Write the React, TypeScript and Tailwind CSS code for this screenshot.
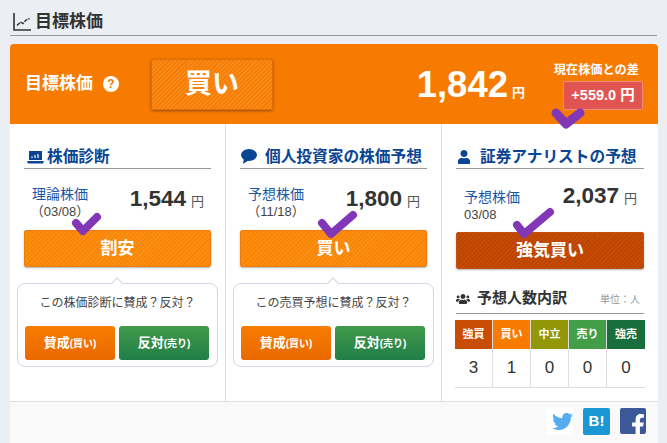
import { FaTwitter, FaFacebookF, FaUser, FaUsers } from "react-icons/fa";

const font = "font-['Liberation_Sans','Noto_Sans_CJK_JP',sans-serif]";

const votes = [
  { label: "強買", value: 3, bg: "bg-[#c94c04]" },
  { label: "買い", value: 1, bg: "bg-[#f77b00]" },
  { label: "中立", value: 0, bg: "bg-[#939607]" },
  { label: "売り", value: 0, bg: "bg-[#429f48]" },
  { label: "強売", value: 0, bg: "bg-[#196e3d]" },
];

function ColumnTitle({ icon, title }: { icon: React.ReactNode; title: string }) {
  return (
    <div className="flex h-[25px] items-end border-b border-[#999] pb-[1px] text-[#0a4594]">
      {icon}
      <span className="text-[15.7px] leading-[20px] font-bold whitespace-nowrap">{title}</span>
    </div>
  );
}

function Price({
  label,
  date,
  value,
  rowClass,
  labelClass,
  dateClass,
  valueClass,
}: {
  label: string;
  date: string;
  value: string;
  rowClass: string;
  labelClass: string;
  dateClass: string;
  valueClass: string;
}) {
  return (
    <div className={`flex justify-between ${rowClass}`}>
      <div className={`w-[72px] text-center ${labelClass}`}>
        <p className="text-[14px] leading-[20px] text-[#1a55a5]">{label}</p>
        <p className={`text-[13px] leading-[16px] text-[#444] ${dateClass}`}>{date}</p>
      </div>
      <p className={`flex h-[24px] items-baseline pr-[7px] text-[#333] ${valueClass}`}>
        <span className="text-[22.5px] leading-[24px] font-bold">{value}</span>
        <span className="ml-[5px] text-[13px] text-[#555]">円</span>
      </p>
    </div>
  );
}

function Rating({ label, dark }: { label: string; dark?: boolean }) {
  return (
    <div
      className={
        dark
          ? "flex h-[37px] items-center justify-center rounded-[2px] border border-[#c2500f] bg-[repeating-linear-gradient(135deg,#c94c04_0px,#c94c04_1.5px,#b94402_1.5px,#b94402_3px)] text-[17px] font-bold text-white shadow-[0_1px_2px_rgba(0,0,0,0.3)]"
          : "flex h-[37px] items-center justify-center rounded-[2px] border border-[#ee7a0c] bg-[repeating-linear-gradient(135deg,#f88400_0px,#f88400_1.5px,#fa9019_1.5px,#fa9019_3px)] text-[17px] font-bold text-white shadow-[0_1px_2px_rgba(0,0,0,0.3)]"
      }
    >
      {label}
    </div>
  );
}

function VoteBox({ question }: { question: string }) {
  return (
    <div className="relative mx-[-7px] mt-4 h-[84px] rounded-[8px] border border-[#cfd8e3] bg-white px-[7px] pt-[10px]">
      <div className="absolute top-[-5px] left-[95px] h-2 w-2 rotate-45 border-t border-l border-[#cfd8e3] bg-white" />
      <p className="text-center text-[12px] leading-[18px] text-[#444]">{question}</p>
      <div className="mt-[14px] flex gap-[4px]">
        <button type="button" className="h-[34px] w-[90px] rounded-[3px] bg-gradient-to-b from-[#f77d00] to-[#e96800] text-[13px] font-bold text-white">
          賛成<span className="text-[10px]">(買い)</span>
        </button>
        <button type="button" className="h-[34px] w-[90px] rounded-[3px] bg-gradient-to-b from-[#429b4c] to-[#1f7e48] text-[13px] font-bold text-white">
          反対<span className="text-[10px]">(売り)</span>
        </button>
      </div>
    </div>
  );
}

export default function App() {
  return (
    <div className={`relative h-[443px] w-[667px] overflow-hidden bg-[#ebeff3] px-[10px] pt-[10px] ${font}`}>
      <div className="flex h-[26px] items-center gap-[4px] border-b border-[#999] pb-[2px] text-[#333]">
        <svg viewBox="0 0 18 18" className="ml-[3px] h-[18px] w-[18px]" fill="none" stroke="#333">
          <path d="M1 0 V17 H18" strokeWidth="1.6" />
          <path d="M4 12.5 L7.5 9 L10 10.5 L13 7 L16.5 5.5" strokeWidth="1.4" strokeDasharray="4 1" />
        </svg>
        <h2 className="text-[17px] leading-[22px] font-bold">目標株価</h2>
      </div>

      <div className="mt-2 w-[648px] overflow-hidden rounded-t-[4px] bg-white">
        <div className="flex h-[80px] items-center bg-[#f77b00] text-white">
          <div className="flex w-[141px] items-center pl-[15px]">
            <span className="text-[17px] font-bold whitespace-nowrap">目標株価</span>
            <span className="ml-[10px] flex h-4 w-4 shrink-0 items-center justify-center rounded-full bg-white text-[12px] leading-none font-bold text-[#f77b00]">?</span>
          </div>
          <div className="flex h-[51px] w-[122px] items-center justify-center rounded-[2px] border border-[#e0700a] bg-[repeating-linear-gradient(135deg,#f77b00_0px,#f77b00_1.5px,#f98c1e_1.5px,#f98c1e_3px)] text-[27px] font-bold shadow-[0_1px_3px_rgba(0,0,0,0.4)]">
            買い
          </div>
          <p className="ml-auto flex items-baseline pt-[2px]">
            <span className="text-[36.5px] leading-[40px] font-bold">1,842</span>
            <span className="ml-[4px] text-[13px] font-bold">円</span>
          </p>
          <div className="mr-[15px] ml-[29px] flex w-[89px] flex-col items-end pt-[5px]">
            <p className="mr-[4px] text-[12.2px] leading-[14px] font-bold whitespace-nowrap">現在株価との差</p>
            <p className="mt-[4px] flex h-[29px] w-[80px] items-center justify-center rounded-[2px] border border-[#ee8f7a] bg-[#e25452] text-[14.5px] font-bold whitespace-nowrap">
              +559.0 円
            </p>
          </div>
        </div>

        <div className="flex h-[277px]">
          <div className="w-[216px] border-r border-[#ddd] px-[14px] pt-[20px]">
            <ColumnTitle
              icon={
                <svg viewBox="0 0 17 13" className="mr-[3px] mb-[3px] ml-[3px] h-[13px] w-[17px]" fill="#0a4594">
                  <path d="M2 0 H15 V9 H2 Z M0 10 H17 L16 12.5 H1 Z" />
                  <path d="M5 7 V5.5 M8 7 V4 M11 7 V3" stroke="#fff" strokeWidth="1.2" />
                </svg>
              }
              title="株価診断"
            />
            <Price label="理論株価" date="（03/08）" value="1,544" rowClass="h-[61px]" labelClass="mt-[15px]" dateClass="" valueClass="mt-[18px]" />
            <Rating label="割安" />
            <VoteBox question="この株価診断に賛成？反対？" />
          </div>
          <div className="w-[216px] border-r border-[#ddd] px-[14px] pt-[20px]">
            <ColumnTitle
              icon={
                <svg viewBox="0 0 16 15" className="mr-[8px] mb-[3px] ml-[1px] h-[15px] w-[16px]" fill="#0a4594">
                  <ellipse cx="8" cy="6" rx="8" ry="6" />
                  <path d="M3 9 L2 15 L8 11 Z" />
                </svg>
              }
              title="個人投資家の株価予想"
            />
            <Price label="予想株価" date="（11/18）" value="1,800" rowClass="h-[61px]" labelClass="mt-[15px]" dateClass="" valueClass="mt-[18px]" />
            <Rating label="買い" />
            <VoteBox question="この売買予想に賛成？反対？" />
          </div>
          <div className="w-[216px] px-[14px] pt-[20px]">
            <ColumnTitle icon={<FaUser className="mr-[9px] mb-[3px] ml-[1px] h-[14px] w-[14px]" />} title="証券アナリストの予想" />
            <Price label="予想株価" date="03/08" value="2,037" rowClass="h-[63px]" labelClass="mt-[18px]" dateClass="mr-[4px] pl-[8px] text-left" valueClass="mt-[15px]" />
            <Rating label="強気買い" dark />
            <div className="mt-[19px] flex h-[26px] items-center border-b border-[#999] pb-[4px] text-[#333]">
              <FaUsers className="mr-[7px] h-[14px] w-[14px] shrink-0" />
              <span className="text-[15px] font-bold whitespace-nowrap">予想人数内訳</span>
              <span className="mt-[2px] mr-[4px] ml-auto text-[10px] whitespace-nowrap text-[#999]">単位：人</span>
            </div>
            <div className="mx-[-1px] mt-[6px] grid grid-cols-5 border-b border-[#ddd]">
              {votes.map((vote, i) => (
                <div key={vote.label} className={i < 4 ? "border-r border-[#ddd]" : ""}>
                  <div className={`flex h-[29px] items-center justify-center text-[11px] font-bold text-white ${vote.bg}`}>{vote.label}</div>
                  <div className="flex h-[38px] items-center justify-center text-[17px] text-[#333]">{vote.value}</div>
                </div>
              ))}
            </div>
          </div>
        </div>

        <div className="flex h-[42px] items-start justify-end gap-[10px] border-t border-[#ddd] bg-[#f9f9f9] pt-[6px] pr-[12px]">
          <span className="flex h-[27px] w-[27px] items-center justify-end bg-white text-[#55acee]">
            <FaTwitter className="h-[21px] w-[21px]" />
          </span>
          <span className="flex h-[27px] w-[27px] items-center justify-center rounded-[2px] bg-[#1a97d4] text-[15px] font-bold text-white">B!</span>
          <span className="flex h-[26px] w-[26px] items-end justify-end overflow-hidden rounded-[2px] bg-[#3b5998] text-white">
            <FaFacebookF className="h-[22px] w-[22px] translate-x-[3px] translate-y-[2px]" />
          </span>
        </div>
      </div>

      {/* hand drawn marks over the page */}
      <svg viewBox="0 0 667 443" className="pointer-events-none absolute top-0 left-0 h-[443px] w-[667px]" fill="none" stroke="#8237b7" strokeLinecap="round" strokeLinejoin="round">
        <path d="M556 113 L566 124 L580 113" strokeWidth="9" />
        <path d="M76 223 L83 231 L97 217" strokeWidth="8" />
        <path d="M322 223 L331 234 L353 215" strokeWidth="8" />
        <path d="M517 225 L524 234 L550 212" strokeWidth="8" />
      </svg>
    </div>
  );
}
